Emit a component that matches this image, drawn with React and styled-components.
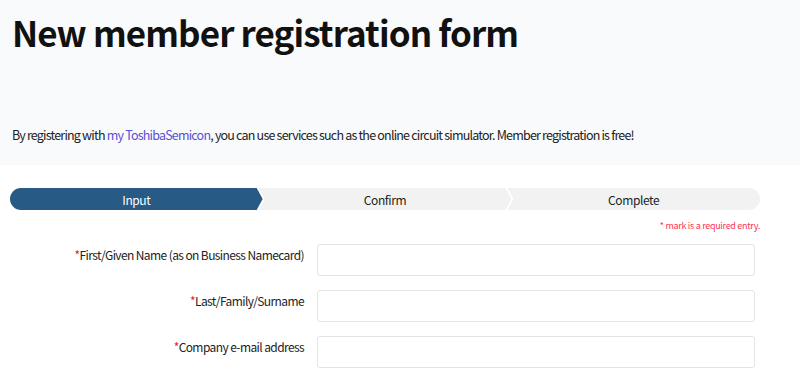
import React from 'react';
import styled, { createGlobalStyle } from 'styled-components';

const GlobalStyle = createGlobalStyle`
  body {
    margin: 0;
    background: #ffffff;
    font-family: "Noto Sans CJK JP", "Noto Sans", sans-serif;
    color: #222;
  }
`;

const Header = styled.header`
  background: #f9fafc;
  height: 165px;
  padding: 0 12px;
  box-sizing: border-box;
  display: flex;
  flex-direction: column;
`;

const Title = styled.h1`
  margin: 8px 0 0;
  font-size: 35px;
  font-weight: 700;
  line-height: 48px;
  letter-spacing: -0.9px;
  color: #111;
`;

const Lead = styled.p`
  margin: 70px 0 0;
  font-size: 12.5px;
  line-height: 18px;
  color: #222;
  letter-spacing: -0.8px;
`;

const Link = styled.a`
  color: #5a4fd6;
  text-decoration: none;
`;

const Steps = styled.ol`
  list-style: none;
  display: flex;
  margin: 23px 0 0 10px;
  padding: 0;
  width: 750px;
`;

const Step = styled.li`
  flex: 1;
  height: 22px;
  display: flex;
  align-items: center;
  justify-content: center;
  font-size: 12px;
  letter-spacing: -0.4px;
  background: ${p => (p.$active ? '#275a85' : '#f2f2f2')};
  color: ${p => (p.$active ? '#fff' : '#222')};
  margin-left: ${p => (p.$first ? '0' : '-4px')};
  border-radius: ${p => (p.$first ? '11px 0 0 11px' : p.$last ? '0 11px 11px 0' : '0')};
  clip-path: ${p =>
    p.$first
      ? 'polygon(0 0, calc(100% - 6px) 0, 100% 50%, calc(100% - 6px) 100%, 0 100%)'
      : p.$last
      ? 'polygon(0 0, 100% 0, 100% 100%, 0 100%, 6px 50%)'
      : 'polygon(0 0, calc(100% - 6px) 0, 100% 50%, calc(100% - 6px) 100%, 0 100%, 6px 50%)'};
`;

const Note = styled.div`
  width: 760px;
  text-align: right;
  font-size: 9px;
  line-height: 12px;
  letter-spacing: -0.3px;
  color: #ff3355;
  margin-top: 10px;
`;

const Form = styled.div`
  display: flex;
  flex-direction: column;
  gap: 14px;
  margin-top: 12px;
`;

const Row = styled.div`
  display: grid;
  grid-template-columns: 304px 438px;
  column-gap: 13px;
  align-items: start;
`;

const Label = styled.label`
  text-align: right;
  font-size: 12px;
  line-height: 16px;
  letter-spacing: -0.6px;
  padding-top: 3px;
  color: #222;
`;

const Req = styled.span`
  color: #e8202a;
`;

const Input = styled.input`
  height: 32px;
  box-sizing: border-box;
  border: 1px solid #e4e4e4;
  border-radius: 3px;
  background: #fff;
  margin: 0;
`;

const fields = [
  'First/Given Name (as on Business Namecard)',
  'Last/Family/Surname',
  'Company e-mail address',
];

export default function App() {
  return (
    <>
      <GlobalStyle />
      <Header>
        <Title>New member registration form</Title>
        <Lead>
          By registering with <Link href="#">my ToshibaSemicon</Link>, you can use services such as the online circuit simulator. Member registration is free!
        </Lead>
      </Header>
      <Steps>
        <Step $active $first>Input</Step>
        <Step>Confirm</Step>
        <Step $last>Complete</Step>
      </Steps>
      <Note>* mark is a required entry.</Note>
      <Form>
        {fields.map(f => (
          <Row key={f}>
            <Label>
              <Req>*</Req>
              {f}
            </Label>
            <Input type="text" />
          </Row>
        ))}
      </Form>
    </>
  );
}
